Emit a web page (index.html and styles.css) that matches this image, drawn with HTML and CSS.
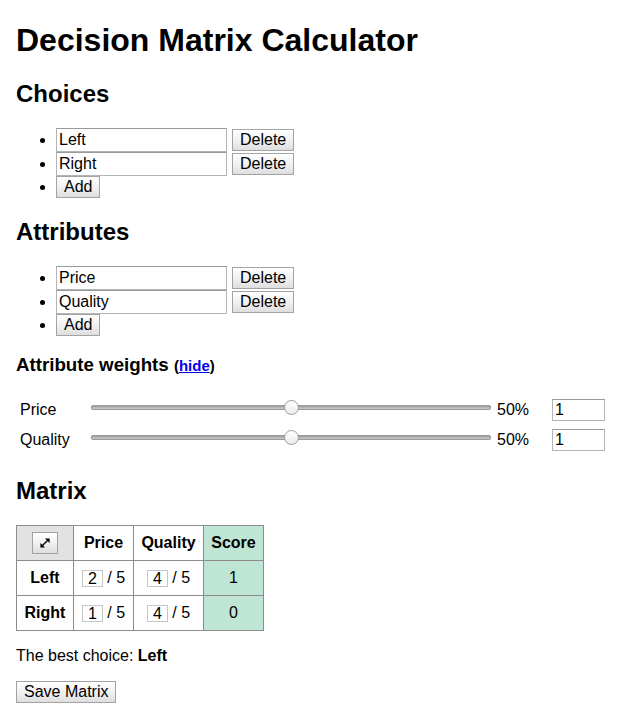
FILE: index.html
```html
<!DOCTYPE html>
<html>
<head>
<meta charset="utf-8">
<title>Decision Matrix Calculator</title>
<link rel="stylesheet" href="styles.css">
</head>
<body>
<h1>Decision Matrix Calculator</h1>

<h2>Choices</h2>
<ul class="items">
  <li><input class="name" type="text" value="Left"><button class="btn del">Delete</button></li>
  <li><input class="name" type="text" value="Right"><button class="btn del">Delete</button></li>
  <li><button class="btn">Add</button></li>
</ul>

<h2>Attributes</h2>
<ul class="items">
  <li><input class="name" type="text" value="Price"><button class="btn del">Delete</button></li>
  <li><input class="name" type="text" value="Quality"><button class="btn del">Delete</button></li>
  <li><button class="btn">Add</button></li>
</ul>

<h3>Attribute weights <span class="toggle">(<a href="#">hide</a>)</span></h3>
<div class="weights">
  <span class="wlabel">Price</span>
  <input class="slider" type="range" min="0" max="100" value="50">
  <span class="pct">50%</span>
  <input class="wnum" type="text" value="1">

  <span class="wlabel">Quality</span>
  <input class="slider" type="range" min="0" max="100" value="50">
  <span class="pct">50%</span>
  <input class="wnum" type="text" value="1">
</div>

<h2>Matrix</h2>
<table class="matrix">
  <colgroup>
    <col class="c-name">
    <col class="c-price">
    <col class="c-quality">
    <col class="c-score">
  </colgroup>
  <tr>
    <th class="corner"><button class="btn expand" aria-label="Expand"><svg width="10" height="10" viewBox="0 0 10 10"><line x1="2.2" y1="7.8" x2="7.8" y2="2.2" stroke="#000" stroke-width="1.3"/><polygon points="9.6,0.4 9.6,5 5,0.4" fill="#000"/><polygon points="0.4,9.6 0.4,5 5,9.6" fill="#000"/></svg></button></th>
    <th>Price</th>
    <th>Quality</th>
    <th class="score">Score</th>
  </tr>
  <tr>
    <th>Left</th>
    <td><input class="rating" type="text" value="2"> / 5</td>
    <td><input class="rating" type="text" value="4"> / 5</td>
    <td class="score">1</td>
  </tr>
  <tr>
    <th>Right</th>
    <td><input class="rating" type="text" value="1"> / 5</td>
    <td><input class="rating" type="text" value="4"> / 5</td>
    <td class="score">0</td>
  </tr>
</table>

<p class="best">The best choice: <b>Left</b></p>
<p class="actions"><button class="btn">Save Matrix</button></p>
</body>
</html>
```

FILE: styles.css
```css
html { margin: 0; padding: 0; }

body {
  margin: 0;
  padding: 0 16px 8px;
  font-family: "Liberation Sans", Arial, Helvetica, sans-serif;
  font-size: 16px;
  color: #000;
  background: #fff;
}

h1 { font-size: 32px; margin: 21.5px 0 21.44px; }
h2 { font-size: 24px; margin: 19.92px 0; }
h3 { font-size: 18.72px; margin: 18.72px 0; }

.toggle { font-size: 0.8em; }
.toggle a { color: #0000ee; text-decoration: underline; }

.items { margin: 16px 0; padding-left: 40px; }

input, button {
  font-family: inherit;
  font-size: 16px;
  color: #000;
  margin: 0;
  box-sizing: border-box;
}

.name {
  width: 171px;
  height: 24px;
  padding: 0 2px;
  border: 1px solid #b4b4b4;
  border-top-color: #9a9a9a;
  background: #fff;
  outline: none;
}

.btn {
  height: 22px;
  padding: 0 7px;
  border: 1px solid #a3a3a3;
  border-radius: 0;
  background: linear-gradient(#ffffff, #f1f1f1 50%, #dedede);
  line-height: 18px;
  cursor: pointer;
}

.del { margin-left: 5px; }

.weights {
  display: grid;
  grid-template-columns: 71px 400px 61px 54px;
  grid-auto-rows: 30px;
  align-items: center;
  padding: 0 0 2px 4px;
}

.pct { padding-left: 6px; }

.slider {
  -webkit-appearance: none;
  appearance: none;
  width: 400px;
  height: 15px;
  margin: 0 0 6px 0;
  padding: 0;
  background: transparent;
}
.slider::-webkit-slider-runnable-track {
  height: 5px;
  border-radius: 3px;
  background: linear-gradient(#8f8f8f, #bdbdbd 60%, #d6d6d6);
  box-shadow: inset 0 0 0 1px #9a9a9a;
}
.slider::-webkit-slider-thumb {
  -webkit-appearance: none;
  appearance: none;
  width: 15px;
  height: 15px;
  margin-top: -5px;
  border-radius: 50%;
  border: 1px solid #9d9d9d;
  box-sizing: border-box;
  background: linear-gradient(#ffffff, #ececec);
}

.wnum {
  width: 53px;
  height: 22px;
  padding: 0 2px;
  border: 1px solid #b4b4b4;
  border-top-color: #9a9a9a;
  background: #fff;
}

.matrix {
  border-collapse: collapse;
  table-layout: fixed;
  width: 247px;
}
.c-name { width: 57px; }
.c-price { width: 60px; }
.c-quality { width: 70px; }
.c-score { width: 60px; }

.matrix th, .matrix td {
  border: 1px solid #8c8c8c;
  padding: 0;
  height: 34px;
  text-align: center;
  vertical-align: middle;
  white-space: nowrap;
  line-height: 18px;
}
.matrix th { font-weight: bold; }
.matrix .corner { background: #e2e2e2; }
.matrix .score { background: #bfe5d4; }

.expand {
  width: 26px;
  padding: 0;
  vertical-align: middle;
  display: inline-flex;
  align-items: center;
  justify-content: center;
}
.expand svg { display: block; }

.rating {
  width: 21px;
  height: 17px;
  padding: 0;
  border: 1px solid #c6c6c6;
  text-align: center;
  line-height: 15px;
  vertical-align: middle;
  background: #fff;
}

.best { margin: 16px 0; }
.actions { margin: 16px 0; }
```
